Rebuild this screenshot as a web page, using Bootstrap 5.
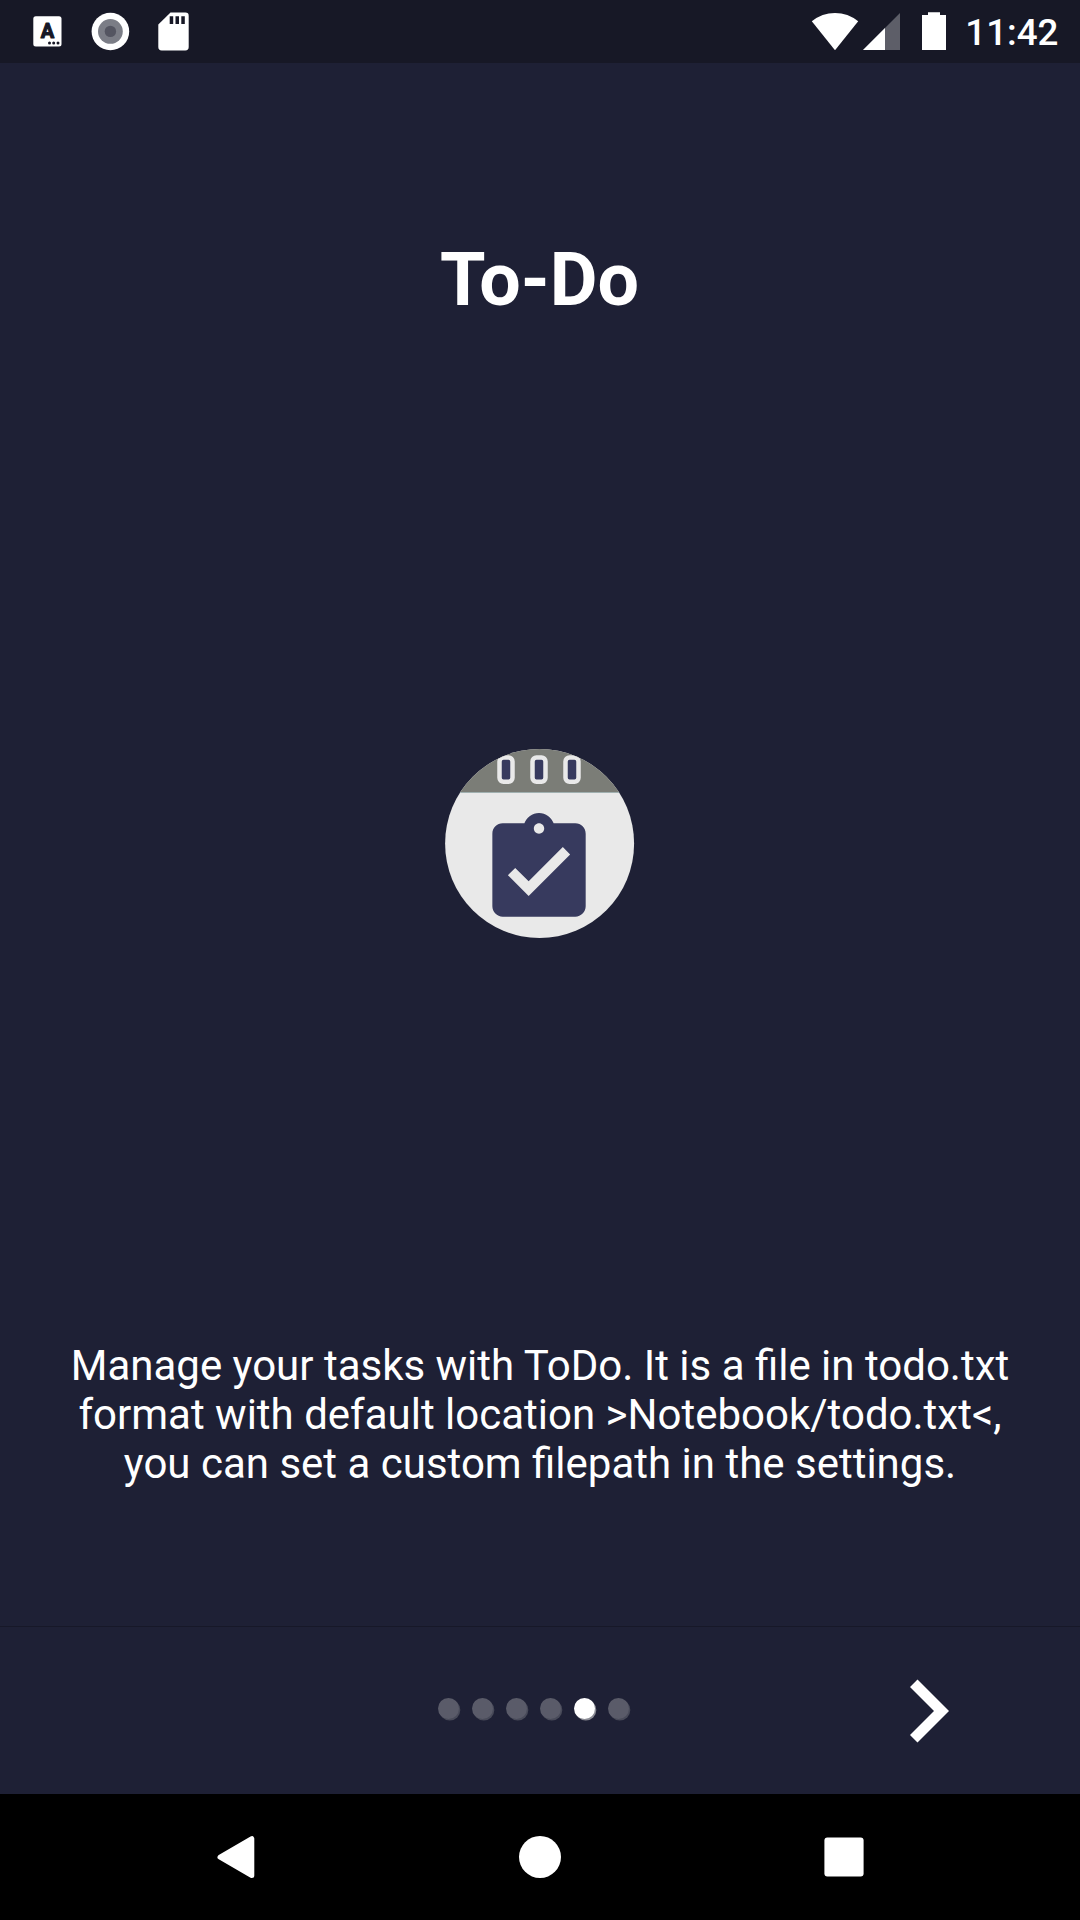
<!DOCTYPE html>
<html lang="en">
<head>
<meta charset="utf-8">
<meta name="viewport" content="width=device-width, initial-scale=1">
<title>To-Do</title>
<link rel="stylesheet" href="https://cdn.jsdelivr.net/npm/bootstrap@5.3.0/dist/css/bootstrap.min.css">
<style>
  body { background: #1e2035; color: #fff; font-family: Roboto, "Noto Sans", sans-serif; }
  svg { display: block; flex: none; }
  .intro { height: 1920px; }
  .status-strip { height: 63px; background: #171826; padding: 0 21.5px 0 33px; }
  .clock { font-size: 36.75px; font-weight: 500; line-height: 43px; margin: 2px 0 0 18.5px; }
  .intro-title { font-size: 73.5px; font-weight: 700; line-height: 86px; margin-top: 174px; padding-right: 1px; }
  .intro-art { margin-top: 426px; }
  .intro-text { font-size: 42px; line-height: 49px; margin-top: 403px; }
  .pager { height: 168px; border-top: 1px solid #171828; padding: 0 131px 0 438px; }
  .dots { gap: 13px; }
  .dot { width: 21px; height: 21px; border-radius: 50%; background: #5a5b69; box-shadow: 1.3px 1.5px 0 #484a59; }
  .dot.current { background: #fff; box-shadow: 1.3px 1.5px 0 #8b8c95; }
  .system-nav { height: 126px; background: #000; padding: 0 216px 0 217px; }
</style>
</head>
<body>
<main class="intro d-flex flex-column overflow-hidden">
  <header class="status-strip d-flex align-items-center justify-content-between">
    <div class="d-flex align-items-center">
      <svg width="29" height="63" viewBox="33 0 29 63"><rect x="33.3" y="16.3" width="28.2" height="30.2" rx="2.5" fill="#fff"/><text x="47.4" y="38" text-anchor="middle" font-family="Roboto" font-weight="700" font-size="20" fill="#171826" stroke="#171826" stroke-width="1.1" stroke-linejoin="round">A</text><g fill="#171826"><circle cx="49.5" cy="43" r="1.5"/><circle cx="53.7" cy="43" r="1.5"/><circle cx="58" cy="43" r="1.5"/></g></svg>
      <svg width="97" height="63" viewBox="62 0 97 63"><circle cx="110.4" cy="31.5" r="18.8" fill="#fff"/><circle cx="110.4" cy="31.4" r="12.4" fill="#7b7d86"/><circle cx="110.4" cy="31.4" r="5.7" fill="#545561"/></svg>
      <svg width="32" height="63" viewBox="159 0 32 63" overflow="visible"><path d="M170.500 12.500H185.500Q188.700 12.500 188.700 15.700V47Q188.700 50.400 185.300 50.400H161.700Q158.300 50.400 158.300 47V24.500Z" fill="#fff"/><path d="M169.700 16.300h3.500V24h-3.500zM175.500 16.300h3.500V24h-3.500zM181.300 16.300h3.500V24h-3.500z" fill="#171826"/></svg>
    </div>
    <div class="d-flex align-items-center">
      <svg width="136" height="63" viewBox="811 0 136 63"><path d="M811.800 21.300Q822 13 835 13T858.200 21.300L835 50.200Z" fill="#fff"/><path d="M900 13V50H863Z" fill="#5d5e68"/><path d="M885 28V50H863Z" fill="#fff"/><path d="M928 12.300h12V15h6v35h-24V15h6z" fill="#fff"/></svg>
      <span class="clock">11:42</span>
    </div>
  </header>

  <h1 class="intro-title text-center mb-0">To-Do</h1>

  <svg class="intro-art align-self-center" width="190" height="189" viewBox="0 0 190 189">
    <defs><clipPath id="disc"><circle cx="94.600" cy="94.500" r="94.500"/></clipPath></defs>
    <g clip-path="url(#disc)">
      <path d="M0 0h190v189H0z" fill="#e9e9e9"/>
      <path d="M0 0h190v43H0z" fill="#7b7d77"/>
      <path d="M0 43.500h190" stroke="#a0b0b0" stroke-width="1"/>
      <g fill="#373a5e" stroke="#e9e9e9" stroke-width="4.500"><rect x="54.500" y="8.400" width="13" height="24.400" rx="4"/><rect x="87.500" y="8.400" width="13" height="24.400" rx="4"/><rect x="120.500" y="8.400" width="13" height="24.400" rx="4"/></g>
      <path transform="translate(31.8 58.800) scale(5.185)" fill="#373a5e" d="M19 3h-4.180C14.400 1.840 13.300 1 12 1c-1.300 0-2.400.84-2.820 2H5c-1.100 0-2 .9-2 2v14c0 1.100.9 2 2 2h14c1.100 0 2-.9 2-2V5c0-1.100-.9-2-2-2zm-7 0c.55 0 1 .45 1 1s-.45 1-1 1-1-.45-1-1 .45-1 1-1zm-2 14l-4-4 1.410-1.410L10 14.170l6.590-6.590L18 9l-8 8z"/>
    </g>
  </svg>

  <p class="intro-text text-center mb-0">Manage your tasks with ToDo. It is a file in todo.txt<br>format with default location &gt;Notebook/todo.txt&lt;,<br>you can set a custom filepath in the settings.</p>

  <div class="pager d-flex align-items-center justify-content-between mt-auto">
    <div class="dots d-flex pb-1">
      <span class="dot"></span><span class="dot"></span><span class="dot"></span><span class="dot"></span><span class="dot current"></span><span class="dot"></span>
    </div>
    <svg width="39" height="64" viewBox="910 1679 39 64"><path d="M917.500 1679.500L949 1711L917.500 1742.500L910 1735L934 1711L910 1687Z" fill="#fff"/></svg>
  </div>

  <nav class="system-nav d-flex align-items-center justify-content-between">
    <svg width="38" height="42" viewBox="0 0 38 42"><path d="M3 21.200L34.800 2.700V39.500Z" fill="#fff" stroke="#fff" stroke-width="5" stroke-linejoin="round"/></svg>
    <svg width="42" height="42" viewBox="0 0 42 42"><circle cx="21" cy="21" r="21" fill="#fff"/></svg>
    <svg width="40" height="40" viewBox="0 0 40 40"><rect x=".4" y=".4" width="39.200" height="39.200" rx="3" fill="#fff"/></svg>
  </nav>
</main>
<script src="https://cdn.jsdelivr.net/npm/bootstrap@5.3.0/dist/js/bootstrap.bundle.min.js"></script>
</body>
</html>
